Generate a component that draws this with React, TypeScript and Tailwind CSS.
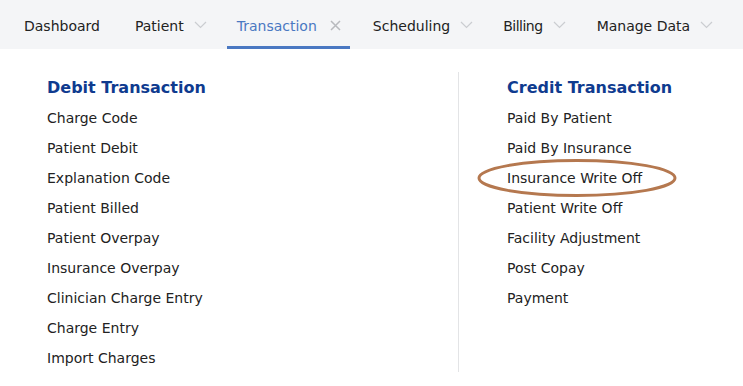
import React from 'react';

const tabs = [
  { label: 'Dashboard', icon: null, cls: 'px-[12px] mr-[11px]' },
  { label: 'Patient', icon: 'chevron', cls: 'px-[12px] mr-[8px]' },
  { label: 'Transaction', icon: 'close', active: true, cls: 'pl-[10px] pr-[9px] mr-[11px]' },
  { label: 'Scheduling', icon: 'chevron', cls: 'px-[12px] mr-[6px]' },
  { label: 'Billing', icon: 'chevron', cls: 'px-[12px] mr-[7px] tracking-[-0.5px]' },
  { label: 'Manage Data', icon: 'chevron', cls: 'px-[12px]' },
];

const debit = [
  'Charge Code',
  'Patient Debit',
  'Explanation Code',
  'Patient Billed',
  'Patient Overpay',
  'Insurance Overpay',
  'Clinician Charge Entry',
  'Charge Entry',
  'Import Charges',
];

const credit = [
  'Paid By Patient',
  'Paid By Insurance',
  'Insurance Write Off',
  'Patient Write Off',
  'Facility Adjustment',
  'Post Copay',
  'Payment',
];

function Chevron() {
  return (
    <svg width="13" height="8" viewBox="0 0 13 8" className="ml-[10px]">
      <path d="M1 1 L6.5 6.5 L12 1" fill="none" stroke="#cbcdd1" strokeWidth="1.2" />
    </svg>
  );
}

function Close() {
  return (
    <svg width="11" height="11" viewBox="0 0 11 11" className="ml-[13px]">
      <path d="M1 1 L10 10 M10 1 L1 10" fill="none" stroke="#b8babe" strokeWidth="1.5" />
    </svg>
  );
}

export default function App() {
  return (
    <div className="w-[743px] h-[386px] bg-white font-['DejaVu_Sans',sans-serif] overflow-hidden">
      {/* Top nav */}
      <div className="h-[49px] bg-[#f4f5f7] flex items-stretch pl-[12px]">
        {tabs.map((t) => (
          <div
            key={t.label}
            className={`flex items-center pt-[4px] text-[14px] border-b-[3px] ${
              t.active ? 'border-[#4a78c2] text-[#4a78c2]' : 'border-transparent text-[#222]'
            } ${t.cls}`}
          >
            <span className="pt-[3px]">{t.label}</span>
            {t.icon === 'chevron' && <Chevron />}
            {t.icon === 'close' && <Close />}
          </div>
        ))}
      </div>

      {/* Dropdown body */}
      <div className="flex pt-[23px]">
        <div className="w-[458px] pl-[47px]">
          <div className="text-[16px] font-bold text-[#0f3b8f] leading-[30px] h-[30px] mt-[1px]">Debit Transaction</div>
          {debit.map((d) => (
            <div key={d} className="text-[14px] text-[#222] leading-[30px]">{d}</div>
          ))}
        </div>
        <div className="w-px bg-[#e3e4e6] h-[300px]" />
        <div className="pl-[48px]">
          <div className="text-[16px] font-bold text-[#0f3b8f] leading-[30px] h-[30px] mt-[1px]">Credit Transaction</div>
          {credit.map((c) => (
            <div key={c} className="relative text-[14px] text-[#222] leading-[30px]">
              {c}
              {c === 'Insurance Write Off' && (
                <svg
                  className="absolute left-[-30px] top-[-5px]"
                  width="200"
                  height="40"
                  viewBox="0 0 200 40"
                >
                  <ellipse cx="100" cy="20" rx="98" ry="17.5" fill="none" stroke="#b5784f" strokeWidth="3" />
                </svg>
              )}
            </div>
          ))}
        </div>
      </div>
    </div>
  );
}
